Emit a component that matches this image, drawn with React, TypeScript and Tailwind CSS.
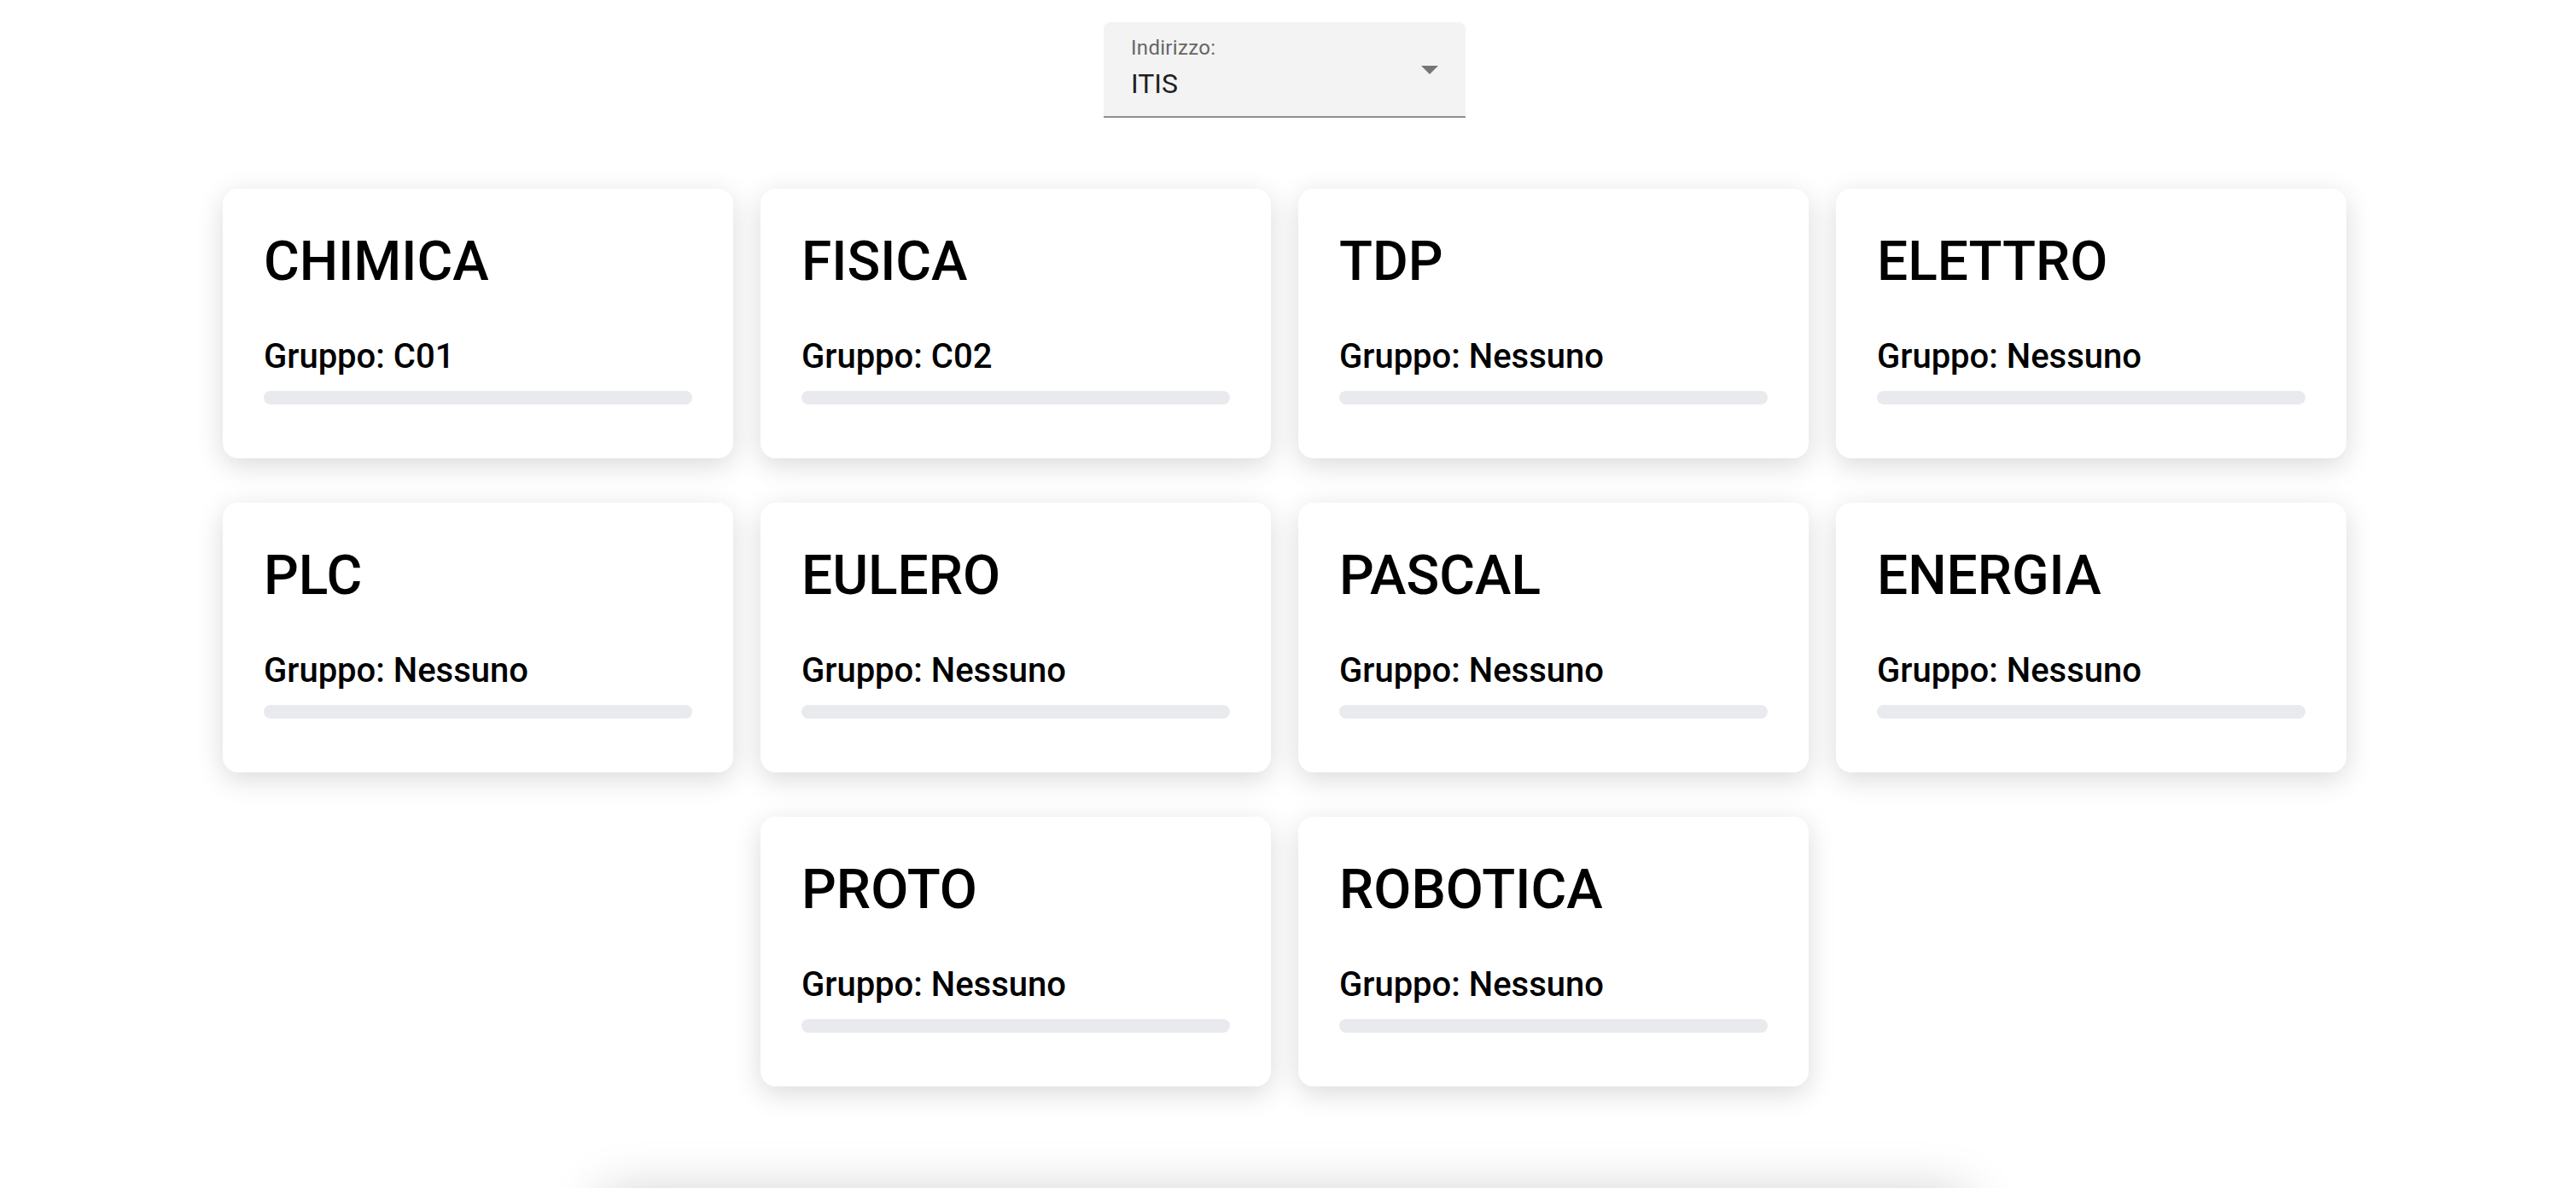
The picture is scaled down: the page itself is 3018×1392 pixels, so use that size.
const labs = [
  { name: 'CHIMICA', gruppo: 'C01' },
  { name: 'FISICA', gruppo: 'C02' },
  { name: 'TDP', gruppo: 'Nessuno' },
  { name: 'ELETTRO', gruppo: 'Nessuno' },
  { name: 'PLC', gruppo: 'Nessuno' },
  { name: 'EULERO', gruppo: 'Nessuno' },
  { name: 'PASCAL', gruppo: 'Nessuno' },
  { name: 'ENERGIA', gruppo: 'Nessuno' },
  { name: 'PROTO', gruppo: 'Nessuno' },
  { name: 'ROBOTICA', gruppo: 'Nessuno' },
];

const IndirizzoSelect = () => (
  <div className="relative w-[424px] h-[112px] bg-[#f3f3f3] rounded-t-[8px] border-b-2 border-[#8e8e8e] pl-[32px] pt-[18px] flex flex-col">
    <span className="text-[24px] leading-[24px] text-[#666666] tracking-[0.3px]">Indirizzo:</span>
    <span className="mt-[10px] text-[32px] leading-[40px] text-[#1f1f1f]">ITIS</span>
    <svg
      className="absolute right-[18px] top-1/2 -translate-y-1/2 w-12 h-12 text-[#757575]"
      viewBox="0 0 24 24"
      fill="currentColor"
    >
      <path d="M7 10l5 5 5-5z" />
    </svg>
  </div>
);

const LabCard = ({ name, gruppo }: { name: string; gruppo: string }) => (
  <div className="w-[598px] bg-white rounded-[18px] shadow-[0_8px_32px_rgba(0,0,0,0.15)] px-[48px] pt-[46px] pb-[46px]">
    <h2 className="text-[64px] leading-[80px] font-medium text-black">{name}</h2>
    <p className="mt-[39px] text-[40px] leading-[64px] font-medium text-black">Gruppo: {gruppo}</p>
    <div className="mt-[8px] mb-[17px] h-4 rounded-full bg-[#e9eaee]" />
  </div>
);

export default function App() {
  return (
    <div className="min-h-screen bg-white overflow-hidden font-['Roboto',sans-serif] flex flex-col items-center pt-[26px] pr-[8px]">
      <IndirizzoSelect />

      <div className="mt-[83px] w-[2488px] flex flex-wrap justify-center gap-x-8 gap-y-[52px]">
        {labs.map(lab => (
          <LabCard key={lab.name} name={lab.name} gruppo={lab.gruppo} />
        ))}
      </div>

      <div className="mt-[128px] w-[1600px] h-[300px] bg-white rounded-[18px] shadow-[0_0_64px_rgba(0,0,0,0.22)]" />
    </div>
  );
}
